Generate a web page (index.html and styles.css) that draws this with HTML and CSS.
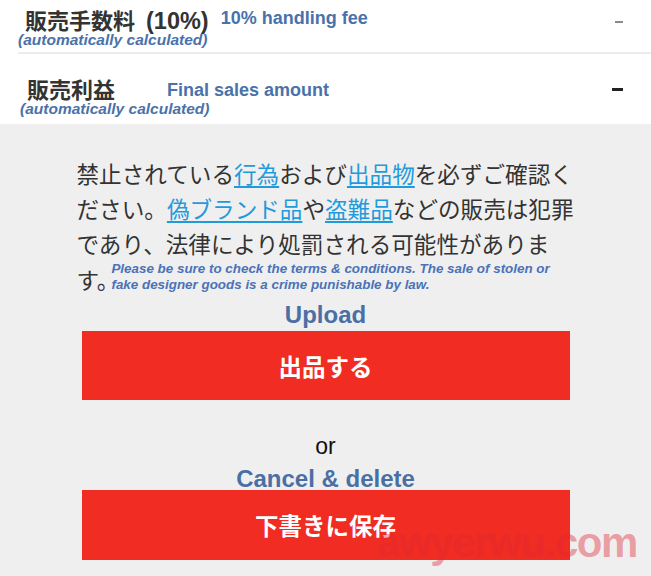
FILE: index.html
```html
<!DOCTYPE html>
<html lang="ja">
<head>
<meta charset="utf-8">
<title>出品</title>
<link rel="stylesheet" href="styles.css">
</head>
<body>
<div class="page">
  <section class="fees">
    <div class="fee fee-first">
      <div class="fee-text">
        <div class="fee-line">
          <span class="fee-title">販売手数料 <span class="pct">(10%)</span></span>
          <span class="fee-en">10% handling fee</span>
        </div>
        <div class="fee-note">(automatically calculated)</div>
      </div>
      <span class="minus minus-light"></span>
    </div>
    <div class="fee fee-second">
      <div class="fee-text">
        <div class="fee-line">
          <span class="fee-title">販売利益</span>
          <span class="fee-en fee-en-wide">Final sales amount</span>
        </div>
        <div class="fee-note fee-note-2">(automatically calculated)</div>
      </div>
      <span class="minus minus-dark"></span>
    </div>
  </section>

  <section class="submit">
    <p class="notice">禁止されている<a class="link" href="#">行為</a>および<a class="link" href="#">出品物</a>を必ずご確認ください。<a class="link" href="#">偽ブランド品</a>や<a class="link" href="#">盗難品</a>などの販売は犯罪であり、法律により処罰される可能性があります。<span class="notice-en">Please be sure to check the terms &amp; conditions. The sale of stolen or fake designer goods is a crime punishable by law.</span></p>

    <div class="label-en label-upload">Upload</div>
    <button class="btn" type="button">出品する</button>
    <div class="or">or</div>
    <div class="label-en label-cancel">Cancel &amp; delete</div>
    <button class="btn" type="button">下書きに保存</button>
  </section>

  <div class="watermark">awyerwu.com</div>
</div>
</body>
</html>
```

FILE: styles.css
```css
* { box-sizing: border-box; }

html, body {
  margin: 0;
  padding: 0;
}

body {
  background: #efefef;
  font-family: "Liberation Sans", "Noto Sans CJK JP", sans-serif;
  color: #333;
}

.page {
  position: relative;
  min-height: 576px;
  overflow: hidden;
}

.fees {
  background: #fff;
}

.fee {
  display: flex;
  align-items: flex-start;
  padding-right: 28px;
}

.fee-first {
  padding-top: 6px;
  padding-bottom: 4px;
  margin-left: 18px;
  border-bottom: 2px solid #ececec;
}

.fee-second {
  padding-top: 21px;
  padding-bottom: 7px;
  padding-left: 20px;
}

.fee-text {
  flex: 1;
}

.fee-line {
  display: flex;
  align-items: center;
  height: 26px;
}

.fee-title {
  font-family: "Noto Sans CJK JP", sans-serif;
  font-weight: 700;
  font-size: 22px;
  color: #333;
  margin-left: 7px;
  white-space: nowrap;
}

.pct {
  font-family: "Liberation Sans", sans-serif;
  font-size: 23.5px;
  margin-left: 6px;
}

.fee-en {
  font-weight: 700;
  font-size: 18px;
  color: #4a72aa;
  margin-left: 12px;
  margin-top: -2px;
}

.fee-en-wide {
  margin-left: 52px;
  margin-top: 4px;
}

.fee-note {
  font-weight: 700;
  font-style: italic;
  font-size: 15.5px;
  line-height: 16px;
  color: #4a72aa;
}

.minus {
  display: block;
  margin-top: 15px;
}

.minus-light {
  width: 8px;
  height: 2px;
  background: #8a8a8a;
}

.minus-dark {
  width: 11px;
  height: 3px;
  background: #222;
  margin-top: 13px;
}

.submit {
  display: flex;
  flex-direction: column;
  align-items: center;
  padding-top: 32px;
}

.notice {
  margin: 0 0 0 2px;
  width: 500px;
  font-family: "Noto Sans CJK JP", sans-serif;
  font-size: 22.6px;
  line-height: 35px;
  color: #333;
}

.link {
  color: #1f9bdc;
  text-decoration: underline;
  text-underline-offset: 3px;
}

.notice-en {
  display: inline-block;
  width: 452px;
  margin-left: -8px;
  font-family: "Liberation Sans", sans-serif;
  font-weight: 700;
  font-style: italic;
  font-size: 13.4px;
  line-height: 16px;
  color: #4a72b8;
  vertical-align: baseline;
}

.label-en {
  font-weight: 700;
  font-size: 24px;
  line-height: 22px;
  color: #4a6fa5;
}

.label-upload {
  margin-top: 7px;
}

.btn {
  display: flex;
  align-items: center;
  justify-content: center;
  width: 488px;
  height: 69px;
  border: 0;
  padding: 0;
  background: #f12c22;
  color: #fff;
  font-family: "Noto Sans CJK JP", sans-serif;
  font-weight: 700;
  font-size: 23.5px;
}

.label-upload + .btn {
  margin-top: 5px;
}

.or {
  margin-top: 32px;
  font-size: 23px;
  line-height: 28px;
  color: #111;
}

.label-cancel {
  margin-top: 8px;
}

.label-cancel + .btn {
  height: 70px;
}

.watermark {
  position: absolute;
  left: 377px;
  top: 522px;
  font-family: "Liberation Sans", sans-serif;
  font-weight: 700;
  font-size: 42px;
  line-height: 42px;
  letter-spacing: -1.4px;
  color: rgba(222, 40, 50, 0.42);
  pointer-events: none;
  white-space: nowrap;
}
```
